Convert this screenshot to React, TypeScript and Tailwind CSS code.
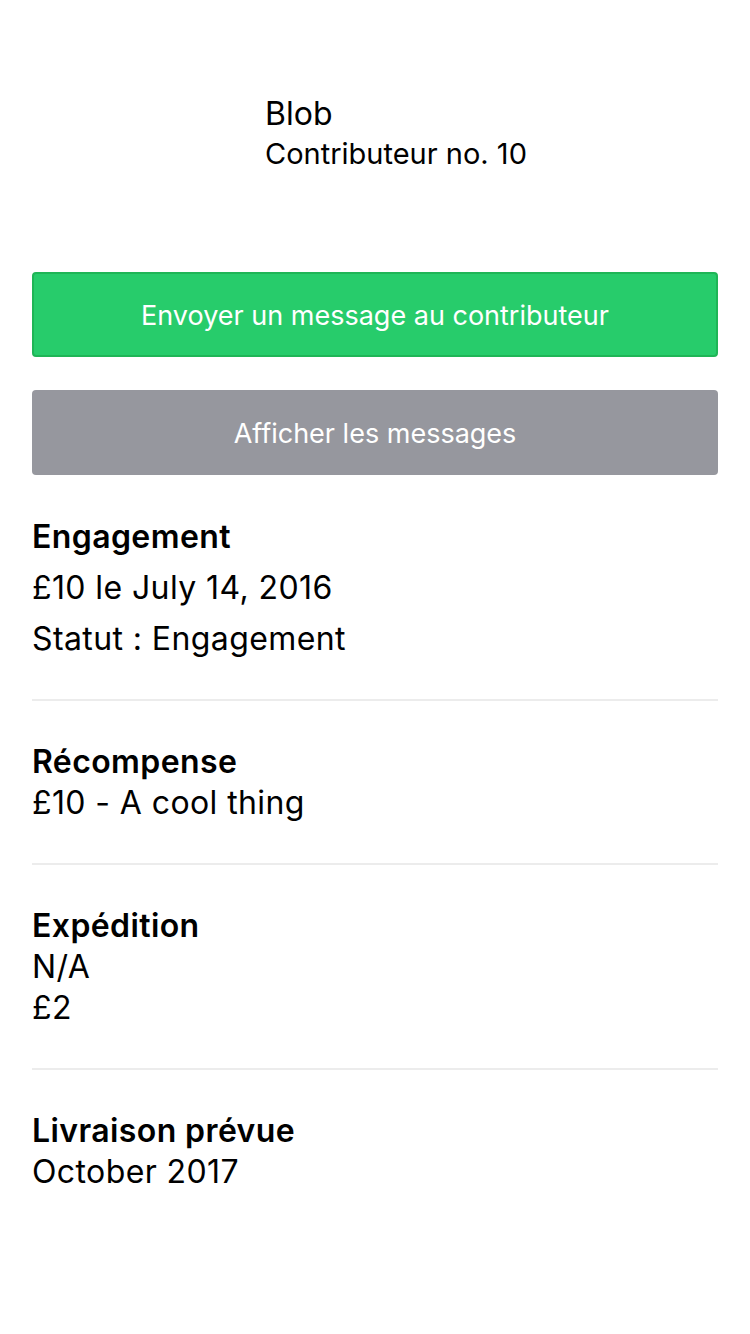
const font = { fontFamily: "Inter, 'Noto Sans', sans-serif" };

const sections = [
  { title: "Engagement", lines: ["£10 le July 14, 2016", "Statut : Engagement"], spaced: true },
  { title: "Récompense", lines: ["£10 - A cool thing"] },
  { title: "Expédition", lines: ["N/A", "£2"] },
  { title: "Livraison prévue", lines: ["October 2017"] },
];

export default function App() {
  return (
    <div className="w-[750px] min-h-[1334px] bg-white text-black" style={font}>
      <div className="px-[32px]">
        {/* header */}
        <div className="flex pt-[94px]">
          <div className="w-[233px] shrink-0" />
          <div>
            <div className="text-[32px] leading-[40px]">Blob</div>
            <div className="text-[29px] leading-[40px]">Contributeur no. 10</div>
          </div>
        </div>

        {/* buttons */}
        <div className="mt-[98px] flex flex-col gap-[33px]">
          <button className="h-[85px] w-full rounded-[4px] border-2 border-[#1fb556] bg-[#27cc6b] pt-[3px] text-[27px] text-white">
            Envoyer un message au contributeur
          </button>
          <button className="h-[85px] w-full rounded-[4px] bg-[#96979e] pt-[3px] text-[27px] text-white">
            Afficher les messages
          </button>
        </div>

        {/* details */}
        <div className="flex flex-col">
          {sections.map((s, i) => (
            <div
              key={s.title}
              className={`${i === 0 ? "pt-[41px]" : "pt-[40px]"} pb-[40px] ${i < sections.length - 1 ? "border-b-2 border-[#ececec]" : ""}`}
            >
              <div className="text-[32px] leading-[41px] font-semibold tracking-[0.4px]">{s.title}</div>
              {s.lines.map((l) => (
                <div
                  key={l}
                  className={`text-[32px] leading-[41px] tracking-[0.4px] ${s.spaced ? "mt-[10px]" : ""}`}
                >
                  {l}
                </div>
              ))}
            </div>
          ))}
        </div>
      </div>
    </div>
  );
}
